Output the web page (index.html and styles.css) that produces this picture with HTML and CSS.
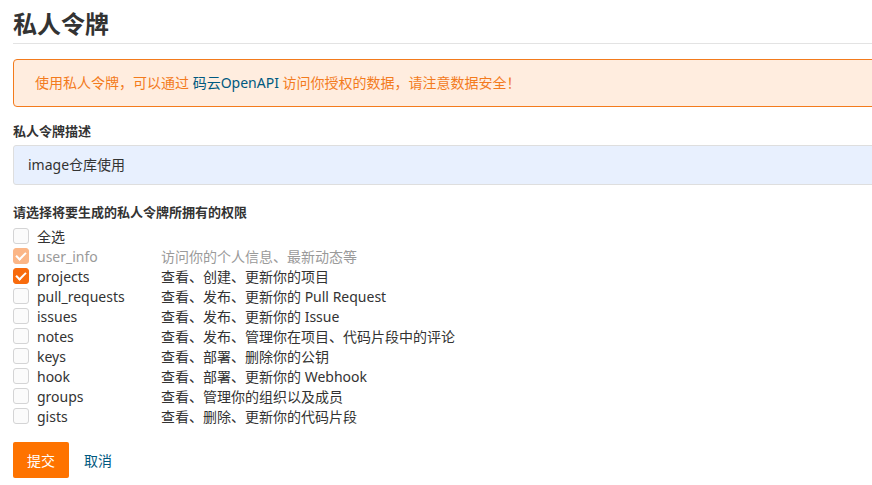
FILE: index.html
```html
<!DOCTYPE html>
<html lang="zh-CN">
<head>
    <meta charset="UTF-8">
    <meta name="viewport" content="width=device-width, initial-scale=1.0">
    <title>私人令牌</title>
    <link rel="stylesheet" href="styles.css">
</head>
<body>
    <div class="page">
        <h1 class="page-title">私人令牌</h1>
        <div class="alert">
            使用私人令牌，可以通过 <a href="#">码云OpenAPI</a> 访问你授权的数据，请注意数据安全！
        </div>
        <form class="token-form">
            <label class="field-label">私人令牌描述</label>
            <div class="input">image仓库使用</div>

            <label class="field-label perm-label">请选择将要生成的私人令牌所拥有的权限</label>
            <div class="perm-list">
                <div class="perm"><span class="box"></span><span class="name">全选</span></div>
                <div class="perm disabled"><span class="box checked"></span><span class="name">user_info</span><span class="desc">访问你的个人信息、最新动态等</span></div>
                <div class="perm"><span class="box checked"></span><span class="name">projects</span><span class="desc">查看、创建、更新你的项目</span></div>
                <div class="perm"><span class="box"></span><span class="name">pull_requests</span><span class="desc">查看、发布、更新你的 Pull Request</span></div>
                <div class="perm"><span class="box"></span><span class="name">issues</span><span class="desc">查看、发布、更新你的 Issue</span></div>
                <div class="perm"><span class="box"></span><span class="name">notes</span><span class="desc">查看、发布、管理你在项目、代码片段中的评论</span></div>
                <div class="perm"><span class="box"></span><span class="name">keys</span><span class="desc">查看、部署、删除你的公钥</span></div>
                <div class="perm"><span class="box"></span><span class="name">hook</span><span class="desc">查看、部署、更新你的 Webhook</span></div>
                <div class="perm"><span class="box"></span><span class="name">groups</span><span class="desc">查看、管理你的组织以及成员</span></div>
                <div class="perm"><span class="box"></span><span class="name">gists</span><span class="desc">查看、删除、更新你的代码片段</span></div>
            </div>

            <div class="actions">
                <button type="button" class="btn-submit">提交</button>
                <a href="#" class="cancel">取消</a>
            </div>
        </form>
    </div>
</body>
</html>
```

FILE: styles.css
```css
body {
    margin: 0;
    font-family: "Noto Sans", "Noto Sans CJK SC", sans-serif;
    font-size: 14px;
    color: #333;
    background: #fff;
    overflow: hidden;
}
.page {
    padding: 0 0 0 13px;
    width: 900px;
}
.page-title {
    margin: 0;
    padding: 9px 0 4px;
    font-size: 24px;
    line-height: 30px;
    font-weight: bold;
    color: #333;
    border-bottom: 1px solid #e3e3e3;
}
.alert {
    margin-top: 15px;
    height: 46px;
    line-height: 46px;
    padding: 0 21px;
    background: #ffeddf;
    border: 1px solid #f37b1d;
    border-radius: 4px;
    color: #f37b1d;
    font-size: 14px;
}
.alert a {
    color: #005980;
    text-decoration: none;
}
.field-label {
    display: block;
    font-weight: bold;
    font-size: 13px;
    line-height: 20px;
    color: #333;
}
.token-form {
    padding-top: 14px;
}
.input {
    margin-top: 4px;
    height: 38px;
    line-height: 38px;
    padding: 0 14px;
    background: #e8f0fe;
    border: 1px solid #dedede;
    border-radius: 3px;
    font-size: 14px;
    color: #333;
}
.perm-label {
    margin-top: 17px;
}
.perm-list {
    margin-top: 4px;
}
.perm {
    display: flex;
    align-items: center;
    height: 20px;
    font-size: 14px;
    color: #333;
}
.box {
    box-sizing: border-box;
    width: 16px;
    height: 16px;
    border: 1px solid #d4d4d5;
    border-radius: 3px;
    background: #fbfbfb;
    margin-right: 8px;
    position: relative;
}
.box.checked {
    background: #f86b0d;
    border-color: #f86b0d;
}
.box.checked::after {
    content: "";
    position: absolute;
    left: 4px;
    top: 1px;
    width: 4px;
    height: 8px;
    border: solid #fff;
    border-width: 0 2px 2px 0;
    transform: rotate(45deg);
}
.perm.disabled .box.checked {
    background: #fbb687;
    border-color: #fbb687;
}
.perm.disabled {
    color: #9a9a9a;
}
.name {
    width: 124px;
}
.actions {
    margin-top: 16px;
    display: flex;
    align-items: center;
}
.btn-submit {
    width: 56px;
    height: 36px;
    border: none;
    border-radius: 2px;
    background: #fe7300;
    color: #fff;
    font-family: inherit;
    font-size: 14px;
    cursor: pointer;
}
.cancel {
    margin-left: 15px;
    color: #005980;
    text-decoration: none;
    font-size: 14px;
}
```
